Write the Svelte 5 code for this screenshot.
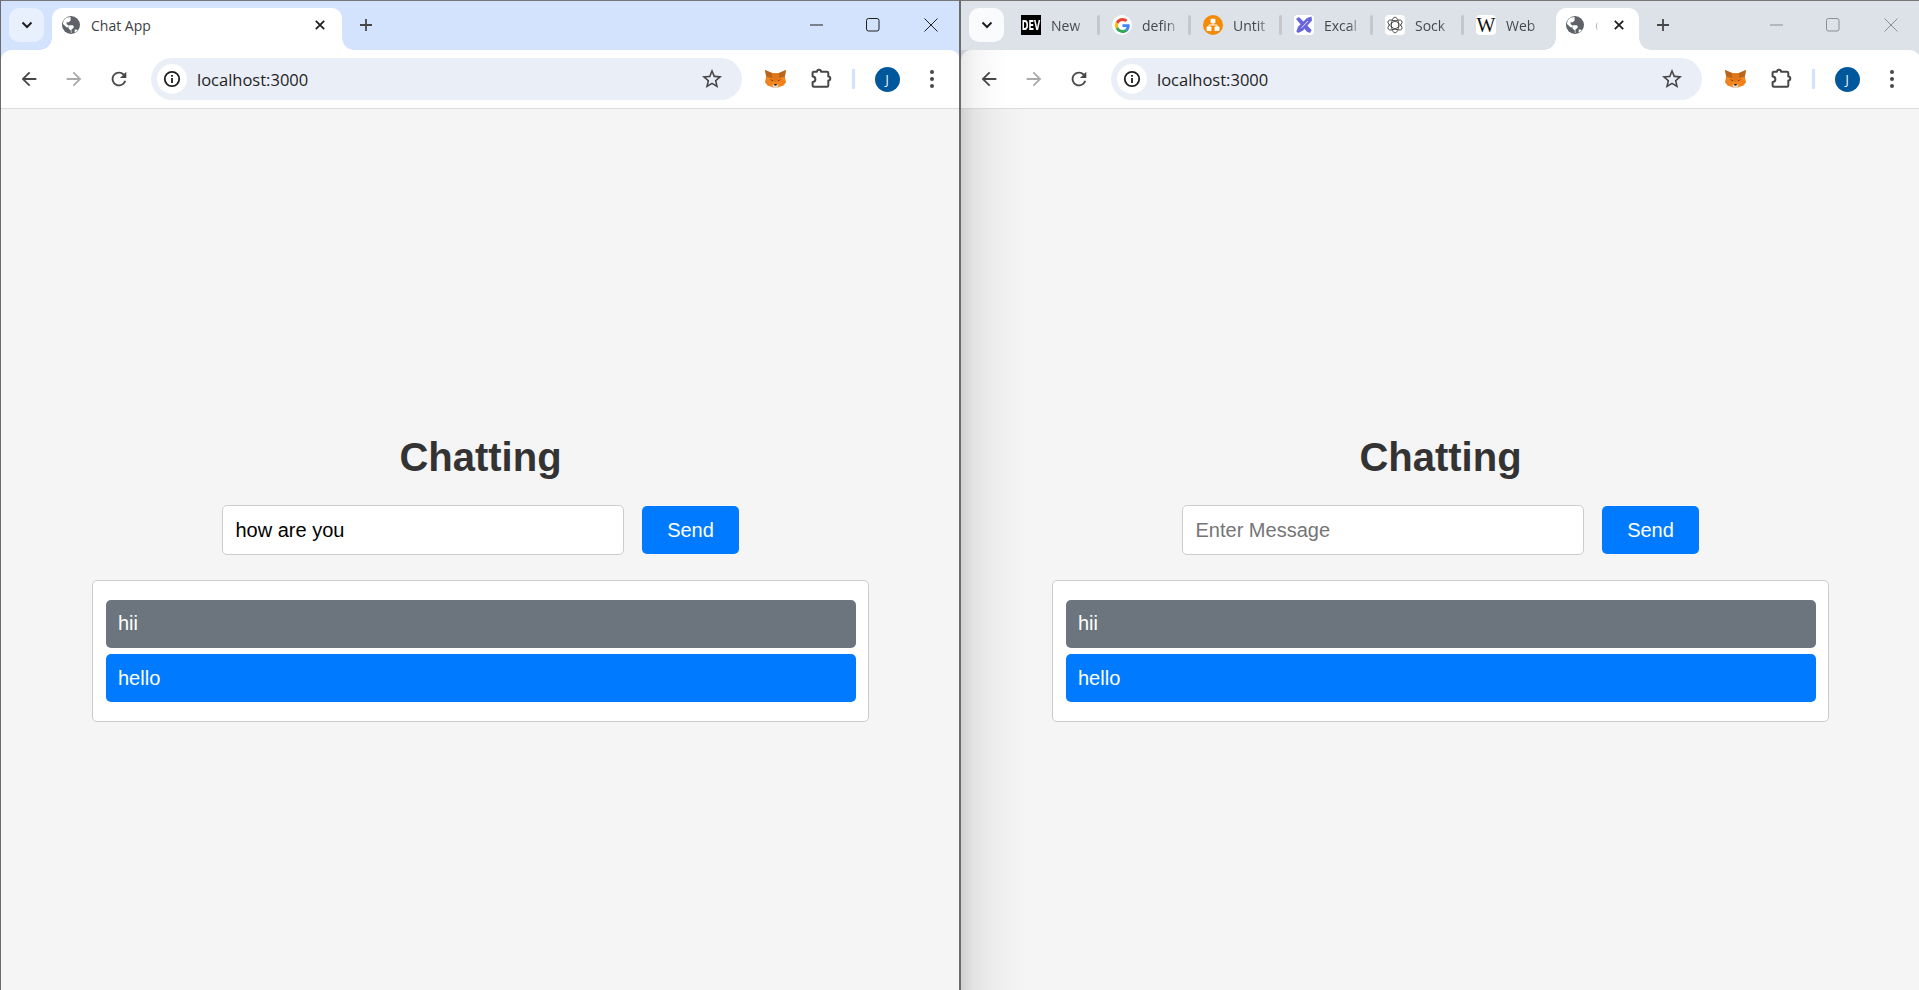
<script>
  const messages = [
    { text: 'hii', kind: 'other' },
    { text: 'hello', kind: 'me' }
  ];
  const tabs = [
    { icon: 'dev', title: 'New' },
    { icon: 'google', title: 'defin' },
    { icon: 'untitled', title: 'Untit' },
    { icon: 'excal', title: 'Excal' },
    { icon: 'openai', title: 'Sock' },
    { icon: 'wiki', title: 'Web' }
  ];
</script>

{#snippet favicon(name)}
  {#if name === 'dev'}
    <span class="fav dev"><span class="dev-word">DEV</span></span>
  {:else if name === 'google'}
    <span class="fav round">
      <svg viewBox="0 0 48 48" width="15" height="15">
        <path fill="#EA4335" d="M24 9.5c3.54 0 6.71 1.22 9.21 3.6l6.85-6.85C35.9 2.38 30.47 0 24 0 14.62 0 6.51 5.38 2.56 13.22l7.98 6.19C12.43 13.72 17.74 9.5 24 9.5z"/>
        <path fill="#4285F4" d="M46.98 24.55c0-1.57-.15-3.09-.38-4.55H24v9.02h12.94c-.58 2.96-2.26 5.48-4.78 7.18l7.73 6c4.51-4.18 7.09-10.36 7.09-17.65z"/>
        <path fill="#FBBC05" d="M10.53 28.59c-.48-1.45-.76-2.99-.76-4.59s.27-3.14.76-4.59l-7.98-6.19C.92 16.46 0 20.12 0 24c0 3.88.92 7.54 2.56 10.78l7.97-6.19z"/>
        <path fill="#34A853" d="M24 48c6.48 0 11.93-2.13 15.89-5.81l-7.73-6c-2.15 1.45-4.92 2.3-8.16 2.3-6.26 0-11.57-4.22-13.47-9.91l-7.98 6.19C6.51 42.62 14.62 48 24 48z"/>
      </svg>
    </span>
  {:else if name === 'untitled'}
    <svg class="fav-svg" viewBox="0 0 20 20" width="20" height="20">
      <circle cx="10" cy="10" r="10" fill="#f58a07"/>
      <rect x="7.6" y="3.8" width="4.8" height="4.4" rx=".6" fill="#fff"/>
      <rect x="3.6" y="11.6" width="4.8" height="4.4" rx=".6" fill="#fff"/>
      <rect x="11.6" y="11.6" width="4.8" height="4.4" rx=".6" fill="#fff"/>
      <path d="M10 8v2H6v2M10 10h4v2" fill="none" stroke="#fff" stroke-width="1"/>
    </svg>
  {:else if name === 'excal'}
    <span class="fav square">
      <svg viewBox="0 0 20 20" width="20" height="20">
        <path d="M2 4 5 2l12.6 13-1.6 3-3-1.2z" fill="#6965db"/>
        <path d="M17.5 1.5 18 5.5 8.8 15.8 4 18 2.4 16.4 4 11.8 13 3z" fill="#6965db"/>
        <path d="M7.6 12.8 14 6" stroke="#fff" stroke-width=".8"/>
      </svg>
    </span>
  {:else if name === 'openai'}
    <span class="fav square">
      <svg viewBox="0 0 20 20" width="20" height="20" fill="none" stroke="#333" stroke-width=".8">
        <ellipse cx="10" cy="10" rx="3.6" ry="7.9"/>
        <ellipse cx="10" cy="10" rx="3.6" ry="7.9" transform="rotate(60 10 10)"/>
        <ellipse cx="10" cy="10" rx="3.6" ry="7.9" transform="rotate(120 10 10)"/>
      </svg>
    </span>
  {:else}
    <span class="fav square wiki">W</span>
  {/if}
{/snippet}

{#snippet globe()}
  <svg class="globe" viewBox="0 0 18 18" width="18" height="18">
    <circle cx="9" cy="9" r="9" fill="#5f6368"/>
    <path d="M3 3C1.8 4.4 1 6 1 8l3.4 3.2h2V9.4L4.6 8V6.2h2.2l1.8-1.8V1.1C6.4 1.2 4.4 1.8 3 3z" fill="#fff"/>
    <path d="M6.4 9.2h4.4l1 1.2v1.2l-2.4 2.2V17h-.6v-2.4L6.4 12.2z" fill="#fff"/>
    <path d="M12.8 13.4h1.6l1.3 1.1c-.9.9-2 1.6-3.1 2z" fill="#fff"/>
  </svg>
{/snippet}

{#snippet fox()}
  <svg class="fox" viewBox="0 0 21 18" width="21" height="18">
    <path d="M0 0 7.6 3.2h5.8L21 0l-1.2 6.4L21 12l-3 3.8-4 1.2-1.4 1H8.4L7 17l-4-1.2L0 12 1.2 6.4z" fill="#f6851b"/>
    <path d="M0 0 7.6 3.2 7 8.2 1.2 6.4zM21 0 13.4 3.2 14 8.2 19.8 6.4z" fill="#b8651f"/>
    <path d="M7.6 3.2h5.8l.6 5-2.6 3.2H9.6L7 8.2z" fill="#e2761b"/>
    <path d="M4.6 9 8.4 10.2 7.4 11.6zM16.4 9 12.6 10.2 13.6 11.6z" fill="#8a4a1a"/>
    <path d="M7.4 15.6 8.8 14h3.4l1.4 1.6L12.6 18H8.4z" fill="#e8d4bf"/>
    <path d="M9 14h3l-.6 1.6H9.6z" fill="#1d1a18"/>
    <path d="M0 12 3 15.8 6.6 14 4.6 10zM21 12 18 15.8 14.4 14 16.4 10z" fill="#f0811f"/>
  </svg>
{/snippet}

{#snippet browser(active, value, placeholder, list)}
  <section class="window" class:blue={active} class:grey={!active}>
    <header class="strip">
      <button class="tabs-menu" aria-label="Search tabs">
        <svg viewBox="0 0 12 8" width="12" height="8"><path d="M1.5 1.5 6 6l4.5-4.5" fill="none" stroke="#1f1f1f" stroke-width="2"/></svg>
      </button>
      {#each list as tab, i}
        <div class="tab">
          {@render favicon(tab.icon)}
          <span class="tab-title">{tab.title}</span>
          {#if i < list.length - 1}<i class="sep"></i>{/if}
        </div>
      {/each}
      <div class="active-tab" class:narrow={list.length > 0}>
        {@render globe()}
        <span class="active-title">{list.length > 0 ? 'C' : 'Chat App'}</span>
        <svg class="tab-close" viewBox="0 0 10 10" width="10" height="10"><path d="M.8.8l8.4 8.4M9.2.8.8 9.2" stroke="#1f1f1f" stroke-width="1.8"/></svg>
      </div>
      <svg class="new-tab" viewBox="0 0 12 12" width="12" height="12"><path d="M6 0v12M0 6h12" stroke="#474747" stroke-width="1.8"/></svg>
      <div class="controls">
        <span class="ctl"><svg viewBox="0 0 14 14" width="14" height="14"><path d="M0 7h13" stroke="currentColor" stroke-width="1"/></svg></span>
        <span class="ctl"><svg viewBox="0 0 14 14" width="14" height="14"><rect x=".5" y=".5" width="12.5" height="12.5" rx="2" fill="none" stroke="currentColor"/></svg></span>
        <span class="ctl"><svg viewBox="0 0 14 14" width="14" height="14"><path d="M.5.5l13 13M13.5.5l-13 13" stroke="currentColor" stroke-width="1"/></svg></span>
      </div>
    </header>

    <nav class="toolbar">
      <span class="nav"><svg viewBox="0 0 24 24" width="22" height="22"><path fill="#474747" d="M20 11H7.83l5.59-5.59L12 4l-8 8 8 8 1.41-1.41L7.83 13H20v-2z"/></svg></span>
      <span class="nav"><svg viewBox="0 0 24 24" width="22" height="22"><path fill="#ababab" d="M4 11h12.17l-5.59-5.59L12 4l8 8-8 8-1.41-1.41L16.17 13H4v-2z"/></svg></span>
      <span class="nav"><svg viewBox="0 0 24 24" width="22" height="22"><path fill="#474747" d="M17.65 6.35A7.958 7.958 0 0 0 12 4c-4.42 0-7.99 3.58-7.99 8s3.57 8 7.99 8c3.73 0 6.84-2.55 7.73-6h-2.08A5.99 5.99 0 0 1 12 18c-3.31 0-6-2.69-6-6s2.69-6 6-6c1.66 0 3.14.69 4.22 1.78L13 11h7V4l-2.35 2.35z"/></svg></span>
      <div class="omnibox">
        <span class="info">
          <svg viewBox="0 0 18 18" width="18" height="18">
            <circle cx="9" cy="9" r="7.2" fill="none" stroke="#1f1f1f" stroke-width="1.8"/>
            <path d="M8.1 8h1.8v5H8.1zM8.1 5h1.8v1.8H8.1z" fill="#1f1f1f"/>
          </svg>
        </span>
        <span class="url">localhost:3000</span>
        <svg class="star" viewBox="0 0 24 24" width="24" height="24"><path fill="#474747" d="M22 9.24l-7.19-.62L12 2 9.19 8.63 2 9.24l5.46 4.73L5.82 21 12 17.27 18.18 21l-1.63-7.03L22 9.24zM12 15.4l-3.76 2.27 1-4.28-3.32-2.88 4.38-.38L12 6.1l1.71 4.04 4.38.38-3.32 2.88 1 4.28L12 15.4z"/></svg>
      </div>
      <span class="action">{@render fox()}</span>
      <span class="action">
        <svg viewBox="0 0 22 22" width="22" height="22"><path d="M3.9 3.7H7a2 2 0 0 1 4 0h6a1.3 1.3 0 0 1 1.3 1.3V8.5a2 2 0 0 1 0 4v5a1.3 1.3 0 0 1-1.3 1.3H3.9a1.3 1.3 0 0 1-1.3-1.3V14a2.75 2.75 0 0 0 0-5.5V5a1.3 1.3 0 0 1 1.3-1.3z" fill="none" stroke="#474747" stroke-width="2" stroke-linejoin="round"/></svg>
      </span>
      <i class="tool-sep"></i>
      <span class="avatar-box"><span class="avatar">J</span></span>
      <span class="action">
        <svg viewBox="0 0 4 20" width="4" height="20"><circle cx="2" cy="3" r="2" fill="#474747"/><circle cx="2" cy="10" r="2" fill="#474747"/><circle cx="2" cy="17" r="2" fill="#474747"/></svg>
      </span>
    </nav>

    <main class="page">
      <h1>Chatting</h1>
      <form class="compose" onsubmit={(e) => e.preventDefault()}>
        <input type="text" {value} {placeholder} />
        <button class="send" type="submit">Send</button>
      </form>
      <div class="panel">
        {#each messages as m}
          <div class="msg {m.kind}">{m.text}</div>
        {/each}
      </div>
    </main>

    {#if !active}
      <div class="cast cast-bar"></div>
      <div class="cast cast-page"></div>
    {/if}
  </section>
{/snippet}

<div class="desktop">
  {@render browser(true, 'how are you', 'Enter Message', [])}
  {@render browser(false, '', 'Enter Message', tabs)}
</div>

<style>
  :global(body) { margin: 0; overflow: hidden; }
  .desktop {
    display: flex;
    width: 1919px;
    height: 990px;
    overflow: hidden;
    font-family: "Liberation Sans", Arial, sans-serif;
  }
  .window {
    position: relative;
    flex: none;
    width: 960px;
    height: 990px;
    box-sizing: border-box;
    display: flex;
    flex-direction: column;
    border-top: 1px solid #767676;
    border-left: 1px solid #6b6b6b;
  }
  .window + .window { box-shadow: -1px 0 0 #6b6b6b; }
  .blue { background: #d3e3fd; --chev: #e8f0fd; --ctl: #1f1f1f; }
  .grey { background: #dde1e8; --chev: #fafbfc; --ctl: #8b8e92; }

  .strip {
    height: 49px;
    flex: none;
    display: flex;
    align-items: flex-start;
    padding: 7px 0 0 8px;
    box-sizing: border-box;
  }
  .tabs-menu {
    flex: none;
    width: 35px;
    height: 34px;
    margin-right: 3px;
    padding: 0;
    border: 0;
    border-radius: 10px;
    background: var(--chev);
    display: flex;
    align-items: center;
    justify-content: center;
  }
  .tab {
    position: relative;
    flex: none;
    width: 91px;
    height: 34px;
    box-sizing: border-box;
    padding-left: 14px;
    display: flex;
    align-items: center;
    gap: 10px;
  }
  .fav {
    flex: none;
    width: 20px;
    height: 20px;
    display: flex;
    align-items: center;
    justify-content: center;
    background: #fff;
  }
  .fav-svg { flex: none; }
  .round { border-radius: 50%; }
  .square { border-radius: 4px; }
  .dev { background: #000; overflow: hidden; }
  .dev-word {
    color: #fff;
    font: 700 9px/10px "DejaVu Sans Condensed", "DejaVu Sans", sans-serif;
    transform: scaleY(1.5);
  }
  .wiki {
    color: #111;
    font: 400 20px/20px "Liberation Serif", serif;
  }
  .tab-title {
    width: 40px;
    overflow: hidden;
    white-space: nowrap;
    font: 14px "Open Sans", sans-serif;
    color: #45484c;
    -webkit-mask-image: linear-gradient(90deg, #000 62%, transparent 95%);
    mask-image: linear-gradient(90deg, #000 62%, transparent 95%);
  }
  .sep {
    position: absolute;
    right: -2px;
    top: 7px;
    width: 3px;
    height: 20px;
    border-radius: 2px;
    background: #c4c7cb;
  }
  .active-tab {
    position: relative;
    flex: none;
    width: 290px;
    height: 42px;
    margin-left: 5px;
    box-sizing: border-box;
    padding: 0 17px 8px 10px;
    background: #fff;
    border-radius: 10px 10px 0 0;
    display: flex;
    align-items: center;
    gap: 11px;
  }
  .active-tab.narrow { width: 83px; margin-left: 3px; padding-right: 15px; }
  .active-tab::before, .active-tab::after {
    content: "";
    position: absolute;
    bottom: 0;
    width: 12px;
    height: 12px;
  }
  .active-tab::before { left: -12px; background: radial-gradient(circle at 0 0, transparent 11.5px, #fff 12px); }
  .active-tab::after { right: -12px; background: radial-gradient(circle at 100% 0, transparent 11.5px, #fff 12px); }
  .globe { flex: none; }
  .active-title {
    flex: 1;
    min-width: 0;
    overflow: hidden;
    white-space: nowrap;
    font: 14px "Open Sans", sans-serif;
    color: #3c4043;
  }
  .narrow .active-title {
    -webkit-mask-image: linear-gradient(90deg, rgba(0,0,0,.7), transparent 3px);
    mask-image: linear-gradient(90deg, rgba(0,0,0,.7), transparent 3px);
  }
  .tab-close { flex: none; }
  .new-tab { flex: none; margin: 11px 0 0 18px; }
  .controls {
    margin-left: auto;
    display: grid;
    grid-template-columns: 54px 58px 58px;
    height: 34px;
    color: var(--ctl);
  }
  .ctl { display: flex; align-items: center; justify-content: center; }

  .toolbar {
    flex: none;
    height: 59px;
    box-sizing: border-box;
    border-bottom: 1px solid #dcdcdc;
    background: #fff;
    border-radius: 10px 10px 0 0;
    display: flex;
    align-items: center;
    padding: 0 5px;
  }
  .nav, .action {
    flex: none;
    width: 45px;
    display: flex;
    justify-content: center;
  }
  .omnibox {
    flex: none;
    width: 591px;
    height: 42px;
    margin: 0 10px 0 10px;
    box-sizing: border-box;
    padding: 0 18px 0 6px;
    border-radius: 21px;
    background: #eaeef7;
    display: flex;
    align-items: center;
  }
  .info {
    flex: none;
    width: 30px;
    height: 30px;
    border-radius: 50%;
    background: #fff;
    display: flex;
    align-items: center;
    justify-content: center;
  }
  .url {
    margin-left: 10px;
    font: 16.5px "Open Sans", sans-serif;
    color: #1f1f1f;
  }
  .star { margin-left: auto; }
  .action { width: 46px; align-items: center; }
  .tool-sep {
    flex: none;
    width: 3px;
    height: 20px;
    margin: 0 10px 0 8px;
    background: #d3e3fd;
  }
  .avatar-box { flex: none; width: 44px; display: flex; justify-content: center; }
  .avatar {
    width: 25px;
    height: 25px;
    border-radius: 50%;
    background: #01579b;
    color: #fff;
    font: 12px/25px "Open Sans", sans-serif;
    text-align: center;
  }

  .page {
    flex: 1;
    background: #f5f5f5;
    display: flex;
    flex-direction: column;
    align-items: center;
    justify-content: center;
    padding-top: 56px;
  }
  h1 {
    margin: 1px 0 25px;
    font-size: 40px;
    font-weight: 700;
    color: #333;
    line-height: 46px;
  }
  .compose {
    display: flex;
    align-items: center;
    gap: 18px;
    margin-bottom: 25px;
  }
  input {
    width: 402px;
    height: 50px;
    box-sizing: border-box;
    padding: 0 12.5px;
    border: 1px solid #ccc;
    border-radius: 5px;
    background: #fff;
    color: #000;
    font: 20px "Liberation Sans", Arial, sans-serif;
    outline: none;
  }
  .send {
    width: 97px;
    height: 48px;
    padding: 0;
    border: 0;
    border-radius: 5px;
    background: #007bff;
    color: #fff;
    font: 20px "Liberation Sans", Arial, sans-serif;
  }
  .panel {
    width: 777px;
    box-sizing: border-box;
    padding: 19px 12px 19px 13px;
    border: 1px solid #ccc;
    border-radius: 5px;
    background: #fff;
    display: flex;
    flex-direction: column;
    gap: 6px;
  }
  .msg {
    height: 48px;
    box-sizing: border-box;
    padding: 0 12px;
    border-radius: 5px;
    color: #fff;
    font-size: 20px;
    line-height: 48px;
  }
  .other { background: #6c757d; line-height: 47px; }
  .me { background: #007bff; }
  .cast {
    position: absolute;
    left: 0;
    width: 75px;
    pointer-events: none;
  }
  .cast-bar {
    top: 49px;
    height: 59px;
    background: linear-gradient(90deg, rgba(0,0,0,.09), rgba(0,0,0,.04) 14px, rgba(0,0,0,.015) 30px, rgba(0,0,0,0) 50px);
  }
  .cast-page {
    top: 108px;
    bottom: 0;
    background: linear-gradient(90deg, rgba(0,0,0,.15), rgba(0,0,0,.08) 12px, rgba(0,0,0,.04) 28px, rgba(0,0,0,.02) 44px, rgba(0,0,0,0) 66px);
  }
</style>
